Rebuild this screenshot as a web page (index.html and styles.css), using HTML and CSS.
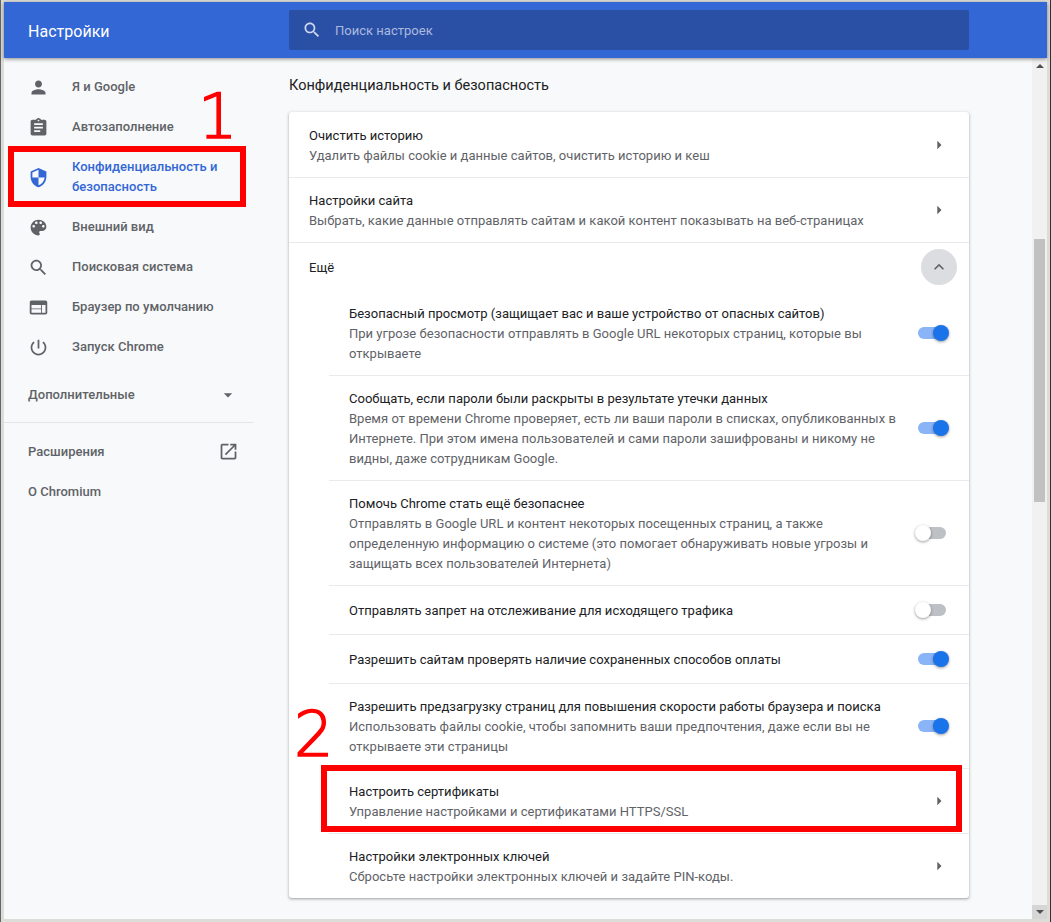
FILE: index.html
```html
<!DOCTYPE html>
<html lang="ru">
<head>
<meta charset="utf-8">
<title>Настройки</title>
<link rel="stylesheet" href="styles.css">
</head>
<body>
<div class="window">
  <header class="topbar">
    <h1 class="app-title">Настройки</h1>
    <div class="search">
      <svg class="search-icon" viewBox="0 0 24 24"><path d="M15.5 14h-.79l-.28-.27C15.41 12.59 16 11.11 16 9.5 16 5.91 13.09 3 9.5 3S3 5.91 3 9.5 5.91 16 9.5 16c1.61 0 3.09-.59 4.23-1.57l.27.28v.79l5 4.99L20.49 19l-4.99-5zm-6 0C7.01 14 5 11.99 5 9.5S7.01 5 9.5 5 14 7.01 14 9.5 11.99 14 9.5 14z"/></svg>
      <span class="search-text">Поиск настроек</span>
    </div>
  </header>
  <div class="body">
    <nav class="sidebar">
      <a class="nav-item"><svg class="nav-icon" viewBox="0 0 24 24"><path d="M12 12c2.21 0 4-1.79 4-4s-1.79-4-4-4-4 1.79-4 4 1.79 4 4 4zm0 2c-2.67 0-8 1.34-8 4v2h16v-2c0-2.66-5.33-4-8-4z"/></svg><span>Я и Google</span></a>
      <a class="nav-item"><svg class="nav-icon" viewBox="0 0 24 24"><path d="M19 3h-4.18C14.4 1.84 13.3 1 12 1c-1.3 0-2.4.84-2.82 2H5c-1.1 0-2 .9-2 2v14c0 1.1.9 2 2 2h14c1.1 0 2-.9 2-2V5c0-1.1-.9-2-2-2zm-7 0c.55 0 1 .45 1 1s-.45 1-1 1-1-.45-1-1 .45-1 1-1zm2 14H7v-2h7v2zm3-4H7v-2h10v2zm0-4H7V7h10v2z"/></svg><span>Автозаполнение</span></a>
      <a class="nav-item nav-active"><svg class="nav-icon" viewBox="0 0 24 24"><path d="M12 1L3 5v6c0 5.55 3.84 10.74 9 12 5.16-1.26 9-6.45 9-12V5l-9-4zm0 10.99h7c-.53 4.12-3.28 7.79-7 8.94V12H5V6.3l7-3.11v8.8z"/></svg><span>Конфиденциальность и безопасность</span></a>
      <a class="nav-item"><svg class="nav-icon" viewBox="0 0 24 24"><path d="M12 3c-4.97 0-9 4.03-9 9s4.03 9 9 9c.83 0 1.5-.67 1.5-1.5 0-.39-.15-.74-.39-1.01-.23-.26-.38-.61-.38-.99 0-.83.67-1.5 1.5-1.5H16c2.76 0 5-2.24 5-5 0-4.42-4.03-8-9-8zm-5.5 9c-.83 0-1.5-.67-1.5-1.5S5.67 9 6.5 9 8 9.67 8 10.5 7.33 12 6.5 12zm3-4C8.67 8 8 7.33 8 6.5S8.67 5 9.5 5s1.5.67 1.5 1.5S10.33 8 9.5 8zm5 0c-.83 0-1.5-.67-1.5-1.5S13.67 5 14.5 5s1.5.67 1.5 1.5S15.33 8 14.5 8zm3 4c-.83 0-1.5-.67-1.5-1.5S16.67 9 17.5 9s1.5.67 1.5 1.5-.67 1.5-1.5 1.5z"/></svg><span>Внешний вид</span></a>
      <a class="nav-item"><svg class="nav-icon" viewBox="0 0 24 24"><path d="M15.5 14h-.79l-.28-.27C15.41 12.59 16 11.11 16 9.5 16 5.91 13.09 3 9.5 3S3 5.91 3 9.5 5.91 16 9.5 16c1.61 0 3.09-.59 4.23-1.57l.27.28v.79l5 4.99L20.49 19l-4.99-5zm-6 0C7.01 14 5 11.99 5 9.5S7.01 5 9.5 5 14 7.01 14 9.5 11.99 14 9.5 14z"/></svg><span>Поисковая система</span></a>
      <a class="nav-item"><svg class="nav-icon" viewBox="0 0 24 24"><path d="M20 4H4c-1.1 0-2 .9-2 2v12c0 1.1.9 2 2 2h16c1.1 0 2-.9 2-2V6c0-1.1-.9-2-2-2zm-5 14H4v-4h11v4zm0-5H4V9h11v4zm5 5h-4V9h4v9z"/></svg><span>Браузер по умолчанию</span></a>
      <a class="nav-item"><svg class="nav-icon" viewBox="0 0 24 24"><path d="M13 3h-2v10h2V3zm4.83 2.17l-1.42 1.42C17.99 7.86 19 9.81 19 12c0 3.87-3.13 7-7 7s-7-3.13-7-7c0-2.19 1.01-4.14 2.58-5.42L6.17 5.17C4.23 6.82 3 9.26 3 12c0 4.97 4.03 9 9 9s9-4.03 9-9c0-2.74-1.23-5.18-3.17-6.83z"/></svg><span>Запуск Chrome</span></a>
      <div class="nav-advanced"><span>Дополнительные</span><svg class="nav-caret" viewBox="0 0 24 24"><path d="M7 10l5 5 5-5z"/></svg></div>
      <div class="nav-divider"></div>
      <a class="nav-link"><span>Расширения</span><svg class="nav-open" viewBox="0 0 24 24"><path d="M19 19H5V5h7V3H5c-1.11 0-2 .9-2 2v14c0 1.1.89 2 2 2h14c1.1 0 2-.9 2-2v-7h-2v7zM14 3v2h3.59l-9.83 9.83 1.41 1.41L19 6.41V10h2V3h-7z"/></svg></a>
      <a class="nav-link"><span>О Chromium</span></a>
    </nav>
    <main class="content">
      <h2 class="section-title">Конфиденциальность и безопасность</h2>
      <section class="card">
        <div class="row row-first">
          <div class="row-text"><div class="label">Очистить историю</div><div class="sub">Удалить файлы cookie и данные сайтов, очистить историю и кеш</div></div>
          <svg class="arrow" viewBox="0 0 24 24"><path d="M10 7l5 5-5 5z"/></svg>
        </div>
        <div class="row">
          <div class="row-text"><div class="label">Настройки сайта</div><div class="sub">Выбрать, какие данные отправлять сайтам и какой контент показывать на веб-страницах</div></div>
          <svg class="arrow" viewBox="0 0 24 24"><path d="M10 7l5 5-5 5z"/></svg>
        </div>
        <div class="row row-more">
          <div class="row-text"><div class="label">Ещё</div></div>
          <span class="collapse"><svg viewBox="0 0 24 24"><path d="M12 8l-6 6 1.41 1.41L12 10.83l4.59 4.58L18 14z"/></svg></span>
        </div>
        <div class="subrows">
          <div class="row subrow subrow-first">
            <div class="row-text"><div class="label">Безопасный просмотр (защищает вас и ваше устройство от опасных сайтов)</div><div class="sub">При угрозе безопасности отправлять в Google URL некоторых страниц, которые вы открываете</div></div>
            <span class="toggle on"><i></i></span>
          </div>
          <div class="row subrow">
            <div class="row-text"><div class="label">Сообщать, если пароли были раскрыты в результате утечки данных</div><div class="sub">Время от времени Chrome проверяет, есть ли ваши пароли в списках, опубликованных в Интернете. При этом имена пользователей и сами пароли зашифрованы и никому не видны, даже сотрудникам Google.</div></div>
            <span class="toggle on"><i></i></span>
          </div>
          <div class="row subrow">
            <div class="row-text"><div class="label">Помочь Chrome стать ещё безопаснее</div><div class="sub">Отправлять в Google URL и контент некоторых посещенных страниц, а также определенную информацию о системе (это помогает обнаруживать новые угрозы и защищать всех пользователей Интернета)</div></div>
            <span class="toggle"><i></i></span>
          </div>
          <div class="row subrow subrow-single">
            <div class="row-text"><div class="label">Отправлять запрет на отслеживание для исходящего трафика</div></div>
            <span class="toggle"><i></i></span>
          </div>
          <div class="row subrow subrow-single">
            <div class="row-text"><div class="label">Разрешить сайтам проверять наличие сохраненных способов оплаты</div></div>
            <span class="toggle on"><i></i></span>
          </div>
          <div class="row subrow">
            <div class="row-text"><div class="label">Разрешить предзагрузку страниц для повышения скорости работы браузера и поиска</div><div class="sub">Использовать файлы cookie, чтобы запомнить ваши предпочтения, даже если вы не открываете эти страницы</div></div>
            <span class="toggle on"><i></i></span>
          </div>
          <div class="row subrow">
            <div class="row-text"><div class="label">Настроить сертификаты</div><div class="sub">Управление настройками и сертификатами HTTPS/SSL</div></div>
            <svg class="arrow" viewBox="0 0 24 24"><path d="M10 7l5 5-5 5z"/></svg>
          </div>
          <div class="row subrow">
            <div class="row-text"><div class="label">Настройки электронных ключей</div><div class="sub">Сбросьте настройки электронных ключей и задайте PIN-коды.</div></div>
            <svg class="arrow" viewBox="0 0 24 24"><path d="M10 7l5 5-5 5z"/></svg>
          </div>
        </div>
      </section>
    </main>
    <div class="scrollbar">
      <div class="sb-btn"><span class="sb-up"></span></div>
      <div class="sb-track"><div class="sb-thumb"></div></div>
      <div class="sb-btn sb-btn-down"><span class="sb-down"></span></div>
    </div>
  </div>
  <div class="mark mark-box-1"></div>
  <div class="mark mark-box-2"></div>
  <div class="mark mark-num mark-num-1">1</div>
  <div class="mark mark-num mark-num-2">2</div>
</div>
</body>
</html>
```
FILE: styles.css
```css
* { box-sizing: border-box; }
html, body { margin: 0; padding: 0; }
body { width: 1051px; height: 922px; overflow: hidden; background: #d9d9d6; font-family: Roboto, "Noto Sans", sans-serif; font-size: 13px; line-height: 20px; letter-spacing: .015px; color: #5f6368; }
.window { position: relative; width: 1051px; height: 922px; padding: 2px 3px 3px 3px; display: flex; flex-direction: column; background: #dcdcd8; border-left: 1px solid #666; border-right: 1px solid #333; }
.topbar { position: relative; z-index: 2; height: 56px; flex: none; display: flex; align-items: center; background: #3367d6; box-shadow: 0 1px 4px rgba(0,0,0,.45); }
.app-title { margin: 0; width: 285px; padding: 4px 0 0 24px; font-size: 16px; font-weight: 400; color: #fff; }
.search { width: 680px; height: 40px; display: flex; align-items: center; background: #2a50a6; border-radius: 2px; padding-left: 13px; }
.search-icon { width: 20px; height: 20px; fill: #cfd8ee; flex: none; }
.search-text { margin-left: 13px; padding-top: 2px; color: #aab9de; font-size: 13px; }
.body { flex: 1; min-height: 0; display: flex; background: #f8f9fa; }
.sidebar { width: 250px; flex: none; padding-top: 9px; font-weight: 500; }
.nav-item { display: flex; align-items: center; height: 40px; padding-left: 24px; color: #5f6368; }
.nav-item span { margin-left: 23px; flex: 1; }
.nav-icon { width: 21px; height: 21px; fill: #5f6368; flex: none; }
.nav-active { height: 60px; color: #3367d6; }
.nav-active span { padding-right: 20px; }
.nav-active .nav-icon { fill: #3367d6; }
.nav-advanced { display: flex; align-items: center; justify-content: space-between; height: 40px; margin-top: 8px; padding: 0 16px 0 24px; }
.nav-caret { width: 20px; height: 20px; fill: #5f6368; }
.nav-divider { height: 1px; background: #e4e5e7; margin-top: 7px; margin-bottom: 8px; }
.nav-link { display: flex; align-items: center; justify-content: space-between; height: 40px; padding: 0 15px 0 24px; }
.nav-link span { padding-top: 2px; }
.nav-open { width: 21px; height: 21px; fill: #5f6368; }
.content { flex: 1; min-width: 0; overflow: hidden; padding-left: 35px; }
.section-title { margin: 0; height: 54px; padding-top: 18px; font-size: 14.5px; font-weight: 400; line-height: 20px; color: #202124; }
.card { width: 680px; background: #fff; border-radius: 3px; box-shadow: 0 1px 2px rgba(60,64,67,.3), 0 1px 3px 1px rgba(60,64,67,.15); }
.row { display: flex; align-items: center; justify-content: space-between; padding: 12px 20px; border-top: 1px solid #e8eaed; }
.row-first { border-top-color: transparent; }
.row-text { width: 560px; margin: 1px 0 -1px; }
.label { color: #202124; }
.sub { color: #5f6368; }
.arrow { width: 20px; height: 20px; fill: #5f6368; flex: none; }
.row-more { height: 49px; padding: 0 12px 0 20px; }
.collapse { width: 36px; height: 36px; border-radius: 50%; background: #dcdde0; display: flex; align-items: center; justify-content: center; }
.collapse svg { width: 20px; height: 20px; fill: #5f6368; }
.subrows { margin-left: 40px; }
.subrow-first { border-top: 0; }
.subrow-single { min-height: 49px; padding-top: 0; padding-bottom: 0; }
.toggle { position: relative; width: 28px; height: 12px; border-radius: 6px; background: #bdc1c6; flex: none; margin-right: 3px; }
.toggle i { position: absolute; top: -2px; left: -3px; width: 16px; height: 16px; border-radius: 50%; background: #fff; box-shadow: 0 1px 3px rgba(0,0,0,.4); }
.toggle.on { background: #8ab4f8; }
.toggle.on i { left: 15px; background: #1a73e8; }
.scrollbar { width: 15px; flex: none; display: flex; flex-direction: column; background: #f1f1f1; }
.sb-btn { height: 16px; flex: none; display: flex; align-items: center; justify-content: center; }
.sb-btn-down { height: 14px; background: #d6d6d6; }
.sb-up { border: 4px solid transparent; border-top: 0; border-bottom: 4px solid #505050; }
.sb-down { border: 4px solid transparent; border-bottom: 0; border-top: 4px solid #505050; }
.sb-track { flex: 1; padding-top: 165px; }
.sb-thumb { width: 11px; height: 263px; margin: 0 2px; background: #c1c1c1; }
.mark { position: absolute; z-index: 3; }
.mark-box-1 { left: 7px; top: 146px; width: 238px; height: 61px; border: 6px solid #f00; }
.mark-box-2 { left: 320px; top: 765px; width: 641px; height: 67px; border: 6px solid #f00; }
.mark-num { color: #f00; font-family: "DejaVu Sans", sans-serif; font-weight: 200; -webkit-text-stroke: 1.6px #f00; font-size: 62px; line-height: 64px; }
.mark-num-1 { left: 197px; top: 85px; }
.mark-num-2 { left: 293px; top: 703px; }
```
